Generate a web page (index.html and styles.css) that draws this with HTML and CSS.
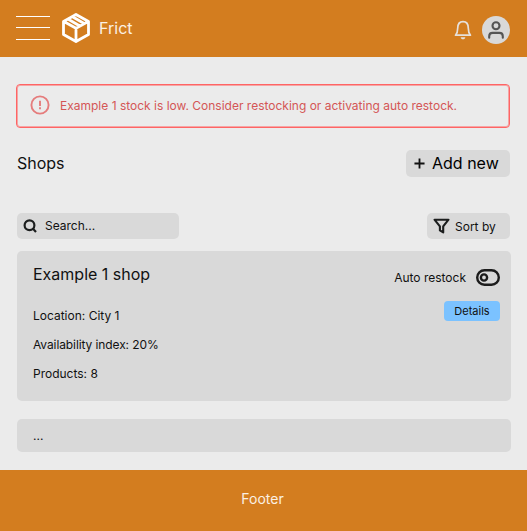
FILE: index.html
```html
<!DOCTYPE html>
<html lang="en">
<head>
<meta charset="utf-8">
<title>Frict</title>
<link rel="stylesheet" href="styles.css">
</head>
<body>
<header class="header">
  <div class="menu"><span></span><span></span><span></span></div>
  <svg class="logo" viewBox="0 0 28 30" fill="none" stroke="#fff" stroke-width="2.8" stroke-linejoin="round" stroke-linecap="round"><path d="M14 1.500 26.500 8.400V21.600L14 28.500 1.500 21.600V8.400ZM1.800 8.500 14 15.200 26.200 8.500M14 15.200V28.300M6.300 6.200 16.500 12.200M10.500 3.800 20.800 9.800"/></svg>
  <span class="brand">Frict</span>
  <svg class="bell" viewBox="0 0 18 20" fill="none" stroke="#e6e0da" stroke-width="1.700" stroke-linejoin="round"><path d="M1.500 15.200C3.200 13.300 3.700 11.500 3.700 8.200C3.700 4.200 5.600 1.600 9 1.600S14.300 4.200 14.300 8.200C14.300 11.500 14.800 13.300 16.500 15.200Z"/><path d="M6.700 17.200h4.600c-.2 1.400-1 2-2.300 2s-2.100-.6-2.300-2Z" fill="#e6e0da" stroke="none"/></svg>
  <div class="avatar"><svg viewBox="0 0 28 28" fill="none" stroke="#555" stroke-width="2.100" stroke-linecap="round"><circle cx="14" cy="9.800" r="3.500"/><path d="M7.200 21.700V20.200Q7.200 16.900 10.600 16.900H17.400Q20.800 16.900 20.800 20.200V21.700"/></svg></div>
</header>
<main class="main">
  <div class="alert">
    <svg class="alert-icon" viewBox="0 0 20 20" fill="none" stroke="#e57c7c" stroke-width="1.900"><circle cx="10" cy="10" r="8.600"/><path d="M10 5.800V11M10 12.300V14.200"/></svg>
    <span>Example 1 stock is low. Consider restocking or activating auto restock.</span>
  </div>
  <div class="title-row">
    <h1 class="title">Shops</h1>
    <div class="box add"><svg class="plus" viewBox="0 0 12 12" stroke="#111" stroke-width="2"><path d="M.5 6H11.500M6 .5V11.500"/></svg><span>Add new</span></div>
  </div>
  <div class="tools">
    <div class="box search"><svg class="glass" viewBox="0 0 14 14" fill="none" stroke="#1c1e1e" stroke-width="2.200"><circle cx="6.500" cy="6.300" r="4.900"/><path d="M9.800 9.600 13 12.900"/></svg><span>Search...</span></div>
    <div class="box sort"><svg class="funnel" viewBox="0 0 17 16" fill="none" stroke="#1c1e1e" stroke-width="2.100" stroke-linejoin="round"><path d="M1.500 1.700H15.500L10.200 8.400V14.400L6.900 12.400V8.400Z"/></svg><span>Sort by</span></div>
  </div>
  <section class="card">
    <div class="info">
      <h2 class="shop">Example 1 shop</h2>
      <p>Location: City 1</p>
      <p class="availability">Availability index: 20%</p>
      <p>Products: 8</p>
    </div>
    <div class="actions">
      <div class="restock"><span>Auto restock</span><svg class="toggle" viewBox="0 0 24 17" fill="none" stroke="#1c1c1c" stroke-width="2.400"><rect x="1.200" y="1.200" width="21.600" height="14.600" rx="7.300"/><circle cx="8" cy="8.500" r="3.100"/></svg></div>
      <div class="details">Details</div>
    </div>
  </section>
  <section class="card more">...</section>
</main>
<footer class="footer">Footer</footer>
</body>
</html>
```
FILE: styles.css
```css
* { box-sizing: border-box; }
body { margin: 0; height: 531px; display: flex; flex-direction: column; background: #ebebeb; color: #111; font: 12px/15px Inter, sans-serif; }
svg { display: block; flex: none; }
h1, h2, p { margin: 0; font-weight: 400; }
.header { height: 57px; padding: 0 17px 0 16px; display: flex; align-items: center; background: #d37d1f; }
.menu { width: 34px; height: 24px; display: flex; flex-direction: column; margin: 0 12px 1px 0; }
.menu span { height: 1px; background: #fff; }
.menu span:nth-child(2) { margin: 10px 0 11px; }
.logo { width: 28px; height: 30px; margin-top: -1px; }
.brand { margin: -2px 0 0 9px; font-size: 16px; line-height: 20px; color: #fbf0e4; }
.bell { width: 18px; height: 20px; margin: 2px 10px 0 auto; }
.avatar { width: 28px; height: 28px; border-radius: 50%; background: #d9d9d9; margin-top: 3px; }
.main { flex: 1; padding: 27px 16px 18px; }
.alert { width: 494px; height: 44px; display: flex; align-items: center; padding: 0 0 2px 13px; gap: 10px; border: 1px solid #ff6464; box-shadow: inset 0 0 0 1px #f5a5a5; border-radius: 4px; color: #d45656; }
.alert-icon { width: 20px; height: 20px; }
.title-row, .tools { display: flex; justify-content: space-between; align-items: center; padding: 0 1px; }
.title-row { margin-top: 22px; height: 27px; }
.title { font-size: 16px; line-height: 20px; margin-top: -2px; }
.box { display: flex; align-items: center; background: #d9d9d9; border-radius: 5px; }
.add { width: 104px; height: 27px; padding-left: 8px; gap: 7px; font-size: 16px; color: #000; }
.plus { width: 11px; height: 11px; }
.tools { margin-top: 36px; height: 26px; }
.search { width: 162px; height: 26px; padding: 0 0 1px 6px; gap: 8px; }
.glass { width: 14px; height: 14px; }
.sort { width: 83px; height: 26px; padding-left: 6px; gap: 5px; }
.funnel { width: 17px; height: 16px; }
.card { width: 494px; height: 150px; margin: 12px 0 0 1px; padding: 13px 11px 0 16px; display: flex; justify-content: space-between; background: #d9d9d9; border-radius: 5px; }
.shop { font-size: 16px; line-height: 20px; margin-bottom: 24px; }
.info p { margin-bottom: 14px; }
.availability { letter-spacing: -0.1px; }
.actions { display: flex; flex-direction: column; align-items: flex-end; padding-top: 5px; }
.restock { display: flex; align-items: center; gap: 10px; }
.toggle { width: 24px; height: 17px; }
.details { width: 56px; height: 20px; margin-top: 15px; border-radius: 4px; background: #7bc2ff; font-size: 11px; line-height: 20px; text-align: center; }
.more { height: 33px; margin-top: 18px; padding-top: 9px; }
.footer { height: 61px; padding-right: 2px; background: #d37d1f; color: #fbf0e4; font-size: 14px; line-height: 58px; text-align: center; }
```
